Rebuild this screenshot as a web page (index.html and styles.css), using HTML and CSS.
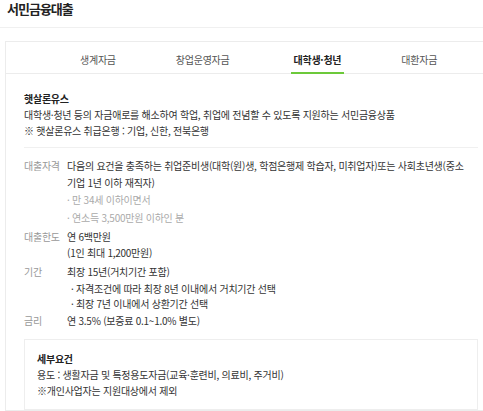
FILE: index.html
```html
<!DOCTYPE html>
<html lang="ko">
<head>
    <meta charset="UTF-8">
    <meta name="viewport" content="width=device-width, initial-scale=1.0">
    <title>서민금융대출</title>
    <link rel="stylesheet" href="styles.css">
</head>
<body>
    <header class="page-title">서민금융대출</header>
    <div class="card">
        <nav class="tabs">
            <span class="tab">생계자금</span>
            <span class="tab">창업운영자금</span>
            <span class="tab active">대학생·청년</span>
            <span class="tab">대환자금</span>
        </nav>
        <div class="content">
            <div class="intro">
                <h3>햇살론유스</h3>
                <p>대학생·청년 등의 자금애로를 해소하여 학업, 취업에 전념할 수 있도록 지원하는 서민금융상품</p>
                <p>※ 햇살론유스 취급은행 : 기업, 신한, 전북은행</p>
            </div>
            <dl class="info">
                <dt>대출자격</dt>
                <dd>
                    다음의 요건을 충족하는 취업준비생(대학(원)생, 학점은행제 학습자, 미취업자)또는 사회초년생(중소기업 1년 이하 재직자)
                    <span class="sub">· 만 34세 이하이면서</span>
                    <span class="sub">· 연소득 3,500만원 이하인 분</span>
                </dd>
                <dt>대출한도</dt>
                <dd>연 6백만원<br>(1인 최대 1,200만원)</dd>
                <dt>기간</dt>
                <dd>
                    최장 15년(거치기간 포함)
                    <span class="note">· 자격조건에 따라 최장 8년 이내에서 거치기간 선택</span>
                    <span class="note">· 최장 7년 이내에서 상환기간 선택</span>
                </dd>
                <dt>금리</dt>
                <dd>연 3.5% (보증료 0.1~1.0% 별도)</dd>
            </dl>
            <div class="detail-box">
                <h4>세부요건</h4>
                <p>용도 : 생활자금 및 특정용도자금(교육·훈련비, 의료비, 주거비)</p>
                <p>※개인사업자는 지원대상에서 제외</p>
            </div>
        </div>
    </div>
</body>
</html>
```

FILE: styles.css
```css
body {
    margin: 0;
    padding: 0;
    background-color: #ffffff;
    font-family: "Noto Sans CJK KR", "Noto Sans", sans-serif;
    color: #333333;
    font-size: 10px;
    letter-spacing: -0.25px;
}
.page-title {
    font-size: 13px;
    font-weight: bold;
    color: #222222;
    letter-spacing: -1px;
    padding: 0 7px;
    height: 27px;
    line-height: 17px;
    border-bottom: 1px solid #f0f0f0;
}
.card {
    margin: 13px 0 0 5px;
    border: 1px solid #ececec;
    border-right: none;
}
.tabs {
    display: flex;
    padding-left: 71px;
    gap: 54px;
    height: 31px;
    border-bottom: 1px solid #ececec;
}
.tab {
    color: #555555;
    padding: 0 3px;
    line-height: 36px;
    height: 30px;
    border-bottom: 2px solid transparent;
}
.tab:nth-child(2) {
    margin-right: 4px;
}
.tab.active {
    color: #222222;
    font-weight: bold;
    border-bottom-color: #6cc93a;
}
.content {
    padding: 17px 5px 0 18px;
}
.intro {
    padding-bottom: 9px;
    border-bottom: 1px solid #f0f0f0;
}
.intro h3 {
    margin: 0;
    font-size: 10px;
    font-weight: bold;
    color: #222222;
    line-height: 16px;
}
.intro p {
    margin: 0;
    line-height: 15.5px;
}
.info {
    display: grid;
    grid-template-columns: 43px 1fr;
    row-gap: 2.5px;
    margin: 10px 0 0 0;
    line-height: 16.5px;
}
.info dt {
    color: #999999;
}
.info dd {
    margin: 0;
    padding-right: 8px;
    color: #333333;
}
.info .sub {
    display: block;
    color: #aaaaaa;
    line-height: 17.5px;
}
.info .note {
    display: block;
    padding-left: 4px;
    line-height: 15px;
}
.detail-box {
    margin-top: 9px;
    border: 1px solid #eeeeee;
    padding: 11px 12px 10px;
}
.detail-box h4 {
    margin: 0;
    font-size: 10px;
    font-weight: bold;
    color: #222222;
    line-height: 16px;
}
.detail-box p {
    margin: 0;
    line-height: 16px;
}
```
